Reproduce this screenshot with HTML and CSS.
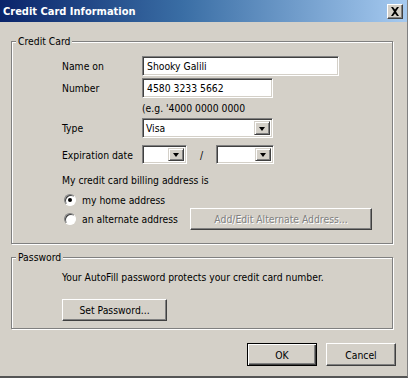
FILE: index.html
```html
<!DOCTYPE html>
<html>
<head>
<meta charset="utf-8">
<link rel="stylesheet" href="styles.css">
</head>
<body>
<div class="window">
  <div class="titlebar">
    <span class="title">Credit Card Information</span>
    <span class="close"><svg width="10" height="9" viewBox="0 0 10 9"><path d="M1 0h2l2 2.5L7 0h2L6 4.5 9 9H7L5 6.5 3 9H1l3-4.5z" fill="#000"/></svg></span>
  </div>

  <div class="group group-card">
    <span class="legend">Credit Card</span>
    <div class="row row-name">
      <span class="label">Name on</span>
      <span class="field field-wide">Shooky Galili</span>
    </div>
    <div class="row row-number">
      <span class="label">Number</span>
      <span class="field field-mid">4580 3233 5662</span>
    </div>
    <div class="row row-hint">
      <span class="label"></span>
      <span class="hint">(e.g. '4000 0000 0000</span>
    </div>
    <div class="row row-type">
      <span class="label">Type</span>
      <span class="select select-mid"><span class="sel-text">Visa</span><span class="sel-btn"><i class="tri"></i></span></span>
    </div>
    <div class="row row-exp">
      <span class="label">Expiration date</span>
      <span class="select select-month"><span class="sel-text"></span><span class="sel-btn"><i class="tri"></i></span></span>
      <span class="slash">/</span>
      <span class="select select-year"><span class="sel-text"></span><span class="sel-btn"><i class="tri"></i></span></span>
    </div>
    <div class="row row-billing">My credit card billing address is</div>
    <div class="row row-radio1">
      <span class="radio checked"></span><span class="radio-label">my home address</span>
    </div>
    <div class="row row-radio2">
      <span class="radio"></span><span class="radio-label radio-label-alt">an alternate address</span>
      <span class="btn btn-addr disabled">Add/Edit Alternate Address...</span>
    </div>
  </div>

  <div class="group group-pass">
    <span class="legend">Password</span>
    <div class="row row-passtext">Your AutoFill password protects your credit card number.</div>
    <div class="row row-passbtn"><span class="btn btn-setpw">Set Password...</span></div>
  </div>

  <div class="footer">
    <span class="btn btn-ok">OK</span>
    <span class="btn btn-cancel">Cancel</span>
  </div>
</div>
</body>
</html>
```

FILE: styles.css
```css
* { box-sizing: border-box; }
html, body { margin: 0; padding: 0; }
body {
  font-family: "DejaVu Sans Condensed", "Liberation Sans", sans-serif;
  font-size: 10.3px;
  color: #000;
  background: #d4d0c8;
  white-space: nowrap;
}
.window {
  width: 408px;
  height: 378px;
  background: #d4d0c8;
  border-right: 1px solid #808080;
  border-bottom: 2px solid #555;
  display: flex;
  flex-direction: column;
}
.titlebar {
  height: 22px;
  background: linear-gradient(to right, #0a246a 0%, #3a6ea5 45%, #a6caf0 100%);
  display: flex;
  align-items: center;
  justify-content: space-between;
  padding: 0 4px 0 3px;
}
.title {
  color: #fff;
  font-weight: bold;
  font-size: 11px;
  font-family: "DejaVu Sans Condensed", "Liberation Sans", sans-serif;
}
.close {
  width: 16px;
  height: 15px;
  background: #d4d0c8;
  border: 1px solid;
  border-color: #fff #404040 #404040 #fff;
  box-shadow: inset -1px -1px #808080;
  display: flex;
  align-items: center;
  justify-content: center;
}
.group {
  position: relative;
  margin-left: 11px;
  width: 382px;
  border: 1px solid #808080;
  box-shadow: inset 1px 1px #fff, 1px 1px #fff;
  padding-left: 50px;
}
.legend {
  position: absolute;
  left: 4px;
  top: -8px;
  padding: 0 2px;
  background: #d4d0c8;
  line-height: 15px;
}
.group-card {
  margin-top: 19px;
  height: 203px;
  padding-top: 14px;
}
.row {
  display: flex;
  align-items: center;
}
.label { width: 80px; }
.row-name { height: 20px; }
.row-number { height: 20px; margin-top: 2px; }
.row-hint { height: 16px; margin-top: 2px; }
.row-type { height: 20px; margin-top: 2px; }
.row-exp { height: 19px; margin-top: 7px; }
.row-billing { height: 16px; margin-top: 8px; }
.row-radio1 { height: 16px; margin-top: 4px; padding-left: 2px; }
.row-radio2 { height: 22px; margin-top: 0px; padding-left: 2px; }

.field, .select {
  height: 100%;
  background: #fff;
  border: 1px solid;
  border-color: #808080 #fff #fff #808080;
  box-shadow: inset 1px 1px #404040, inset -1px -1px #d4d0c8;
  display: flex;
  align-items: center;
  padding-left: 4px;
}
.field-wide { width: 197px; }
.field-mid { width: 131px; }
.select { padding: 2px 2px 2px 2px; }
.select-mid { width: 131px; }
.select-month { width: 45px; }
.select-year { width: 58px; }
.sel-text { flex: 1; padding-left: 1px; }
.sel-btn {
  width: 16px;
  height: 100%;
  background: #d4d0c8;
  border: 1px solid;
  border-color: #d4d0c8 #404040 #404040 #d4d0c8;
  box-shadow: inset 1px 1px #fff, inset -1px -1px #808080;
  display: flex;
  align-items: center;
  justify-content: center;
}
.tri {
  width: 0;
  height: 0;
  border-left: 3.5px solid transparent;
  border-right: 3.5px solid transparent;
  border-top: 4px solid #000;
  margin-top: 1px;
}
.slash { width: 29px; text-align: center; }

.radio {
  width: 12px;
  height: 12px;
  border-radius: 50%;
  background: #fff;
  border: 1px solid;
  border-color: #808080 #fff #fff #808080;
  box-shadow: inset 1px 1px #404040;
  display: flex;
  align-items: center;
  justify-content: center;
  flex: none;
}
.radio.checked::after {
  content: "";
  width: 4px;
  height: 4px;
  border-radius: 50%;
  background: #000;
}
.radio-label { margin-left: 6px; }
.radio-label-alt { width: 108px; }

.btn {
  display: flex;
  align-items: center;
  justify-content: center;
  background: #d4d0c8;
  border: 1px solid;
  border-color: #fff #404040 #404040 #fff;
  box-shadow: inset -1px -1px #808080;
  height: 22px;
}
.btn.disabled { color: #808080; text-shadow: 1px 1px #fff; }
.btn-addr { width: 182px; }

.group-pass {
  margin-top: 13px;
  height: 72px;
  padding-top: 11px;
}
.row-passtext { height: 16px; }
.row-passbtn { margin-top: 14px; }
.btn-setpw { width: 105px; }

.footer {
  display: flex;
  justify-content: flex-end;
  gap: 9px;
  margin-top: 14px;
  padding-right: 11px;
}
.btn-ok, .btn-cancel { width: 70px; height: 23px; }
.btn-ok {
  border: 1px solid #000;
  box-shadow: inset 1px 1px #fff, inset -1px -1px #404040, inset -2px -2px #808080;
}
```
